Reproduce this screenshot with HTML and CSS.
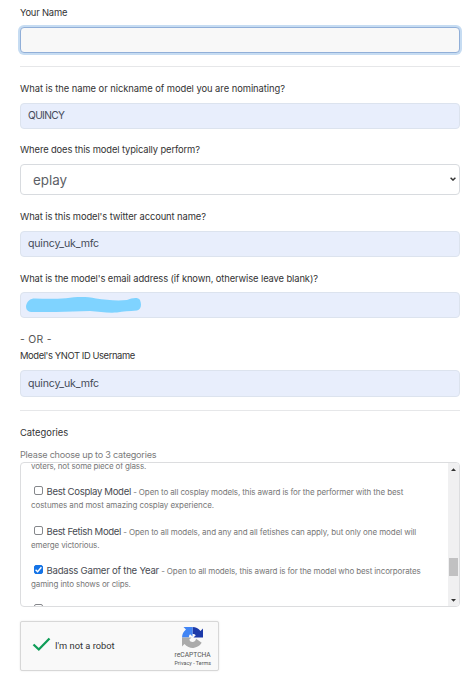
FILE: index.html
```html
<!DOCTYPE html>
<html lang="en">
<head>
<meta charset="utf-8">
<title>Nomination form</title>
<link rel="stylesheet" href="styles.css">
</head>
<body>
<form class="form">
  <section class="group">
    <label class="label l-name">Your Name</label>
    <div class="input focused"></div>
  </section>
  <hr class="rule">
  <section class="group">
    <label class="label l-nick">What is the name or nickname of model you are nominating?</label>
    <div class="input filled caps">QUINCY</div>
  </section>
  <section class="group perform">
    <label class="label l-where">Where does this model typically perform?</label>
    <div class="select"><span>eplay</span>
      <svg class="chevron" viewBox="0 0 6 4"><path d="M.6 .7 3 3.1 5.4 .7"/></svg>
    </div>
  </section>
  <section class="group twitter">
    <label class="label l-twitter">What is this model's twitter account name?</label>
    <div class="input filled">quincy_uk_mfc</div>
  </section>
  <section class="group email">
    <label class="label l-email">What is the model's email address (if known, otherwise leave blank)?</label>
    <div class="input filled redacted">
      <svg class="scribble" viewBox="0 0 116 16"><path d="M0 9C1 4 4 1.500 9 1.500C20 2 30 2 40 1.200C51 -.3 60 -.6 70 1.500C80 3 91 4 101 3C106 1 112 0 114 3C116 8 115 13 111 13.500C103 14.500 97 14 91 15.500C82 16 73 15 64 14C52 14 42 15 30 15C21 15 13 15 7 15C2 15 0 13 0 9Z"/></svg>
    </div>
  </section>
  <p class="or">- OR -</p>
  <section class="group ynot">
    <label class="label l-ynot">Model's YNOT ID Username</label>
    <div class="input filled tall">quincy_uk_mfc</div>
  </section>
  <hr class="rule">
  <section class="categories">
    <label class="label l-cat">Categories</label>
    <p class="hint">Please choose up to 3 categories</p>
    <div class="list">
      <div class="items">
        <p class="item tail"><span class="d0">voters, not some piece of glass.</span></p>
        <p class="item"><span class="box"></span><b class="t1">Best Cosplay Model</b> <span class="d1">- Open to all cosplay models, this award is for the performer with the best</span><br><span class="d2">costumes and most amazing cosplay experience.</span></p>
        <p class="item"><span class="box"></span><b class="t2">Best Fetish Model</b> <span class="d3">- Open to all models, and any and all fetishes can apply, but only one model will</span><br><span class="d4">emerge victorious.</span></p>
        <p class="item"><span class="box checked"><svg viewBox="0 0 9 9"><path d="M1.6 4.8 3.6 6.7 7.4 2.2"/></svg></span><b class="t3">Badass Gamer of the Year</b> <span class="d5">- Open to all models, this award is for the model who best incorporates</span><br><span class="d6">gaming into shows or clips.</span></p>
        <p class="item"><span class="box"></span></p>
      </div>
      <div class="scrollbar">
        <svg class="arrow" viewBox="0 0 5 3"><path d="M0 3 2.5 .3 5 3Z"/></svg>
        <span class="thumb"></span>
        <svg class="arrow" viewBox="0 0 5 3"><path d="M0 0 2.5 2.7 5 0Z"/></svg>
      </div>
    </div>
  </section>
  <div class="captcha">
    <svg class="tick" viewBox="0 0 19 15"><path d="M1.5 7.5 6.8 12.5 17.5 1.5"/></svg>
    <span class="robot">I'm not a robot</span>
    <div class="brand">
      <svg class="logo" viewBox="0 0 64 64">
        <path fill="#1c3aa9" d="M64 32V4.500l-7.600 7.600A32 32 0 0 0 32 0v21c5 0 8 1 10 4L35 32Z"/>
        <path fill="#4285f4" d="M32 0H4.500l7.600 7.600A32 32 0 0 0 0 32h21c0-5 1-8 4-10L32 29Z"/>
        <path fill="#ababab" d="M0 32v27.500l7.600-7.600A32 32 0 0 0 60 48L43 36A11 11 0 0 1 22 39L29 32Z"/>
      </svg>
      <span class="re">reCAPTCHA</span>
      <span class="terms">Privacy - Terms</span>
    </div>
  </div>
</form>
</body>
</html>
```

FILE: styles.css
```css
* { box-sizing: border-box; }
body { margin: 0; width: 470px; height: 680px; overflow: hidden; background: #fff; font-family: Inter, "Open Sans", sans-serif; color: #333; }
p { margin: 0; }
.form { padding: 5px 10px 0 20px; }
.label { display: block; width: max-content; height: 16px; line-height: 16px; font-size: 9.4px; color: #333; white-space: nowrap; margin-bottom: 6px; }
.l-name { letter-spacing: -.2px; }
.l-nick { letter-spacing: -.05px; }
.l-where { letter-spacing: -.12px; }
.l-twitter { letter-spacing: -.1px; }
.l-email { letter-spacing: -.11px; }
.input { display: flex; align-items: center; height: 26px; border: 1px solid #dce3ee; border-radius: 4px; padding: 0 7px 1px; font-size: 10.6px; color: #454b59; letter-spacing: -.2px; }
.filled { background: #e8eefc; }
.caps { font-size: 10.2px; letter-spacing: -.65px; padding-bottom: 2px; }
.focused { background: #f8f8f8; border-color: #91afd8; box-shadow: 0 0 0 2px #c6dcf2; }
.tall { height: 27px; }
.rule { border: 0; height: 1px; margin: 13px 0 14px; background: #e6e7e9; }
.perform { margin-top: 13px; }
.twitter { margin-top: 14px; }
.email { margin-top: 14px; }
.email .label { margin-bottom: 5px; }
.select { display: flex; align-items: center; justify-content: space-between; height: 31px; border: 1px solid #d8dbdf; border-radius: 4px; padding: 1px 3px 0 12px; font-size: 13.4px; color: #5c6066; }
.chevron { width: 6px; height: 4px; fill: none; stroke: #333; stroke-width: 1.4; margin-top: -2px; }
.redacted { padding: 0 5px 0; }
.scribble { width: 116px; height: 16px; fill: #7fd3ff; margin-top: -1px; }
.or { height: 16px; margin-top: 14px; line-height: 16px; font-size: 10.4px; color: #555; letter-spacing: .3px; }
.l-ynot { letter-spacing: -.4px; }
.categories .label { margin-bottom: 6px; }
.hint { height: 15px; line-height: 15px; font-size: 9.1px; letter-spacing: -.22px; color: #7b7b7b; white-space: nowrap; }
.list { display: flex; height: 145px; border: 1px solid #dcdddf; border-radius: 4px; overflow: hidden; }
.items { flex: 1; min-width: 0; padding-left: 10px; }
.item { height: 39.5px; font-size: 8px; line-height: 13px; color: #777; white-space: nowrap; }
.item.tail { height: 25.5px; margin-top: -3.5px; }
.item b { font-weight: 400; font-size: 9.6px; color: #484b52; line-height: 13px; }
.t1 { letter-spacing: -.33px; }
.t2 { letter-spacing: -.37px; }
.t3 { letter-spacing: -.24px; }
.d0 { letter-spacing: -.17px; }
.d1 { letter-spacing: -.11px; }
.d2 { letter-spacing: -.08px; }
.d3 { letter-spacing: -.09px; }
.d4, .d5, .d6 { letter-spacing: -.12px; }
.box { display: inline-block; width: 9px; height: 9px; border: 1px solid #85878b; border-radius: 2px; margin: 0 4px 0 2.5px; vertical-align: 0; }
.checked { background: #1473e6; border-color: #1473e6; }
.checked svg { display: block; width: 9px; height: 9px; margin: -1px; fill: none; stroke: #fff; stroke-width: 1.4; }
.scrollbar { display: flex; flex-direction: column; align-items: center; width: 11px; padding: 5px 0 4px; background: #f0f0f1; }
.arrow { width: 5px; height: 3px; fill: #333; flex: none; }
.thumb { width: 9px; height: 18px; background: #c1c1c2; margin: 87px 0 auto; }
.captcha { display: flex; align-items: center; width: 199px; height: 50px; margin-top: 14px; padding: 0 7px 0 11px; background: #f9f9f9; border: 1px solid #d7d7d7; border-radius: 2px; font-family: Roboto, sans-serif; box-shadow: 0 0 2px #e5e5e5; }
.tick { width: 19px; height: 15px; fill: none; stroke: #0f9d58; stroke-width: 2.3; margin-top: -3px; }
.robot { margin-left: 4px; font-size: 9.3px; color: #333; margin-top: -1px; }
.brand { display: flex; flex-direction: column; align-items: center; margin-left: auto; color: #555; white-space: nowrap; padding-top: 2px; }
.logo { width: 21px; height: 21px; }
.re { font-size: 6.7px; line-height: 8px; margin-top: 3px; }
.terms { font-size: 5.4px; line-height: 8px; }
```
